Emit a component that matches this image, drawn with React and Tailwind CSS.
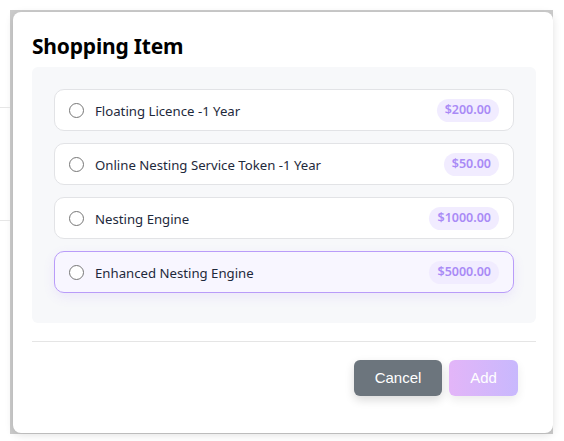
import React from "react";

const items = [
  { name: "Floating Licence -1 Year", price: "$200.00" },
  { name: "Online Nesting Service Token -1 Year", price: "$50.00" },
  { name: "Nesting Engine", price: "$1000.00" },
  { name: "Enhanced Nesting Engine", price: "$5000.00", active: true },
];

export default function App() {
  return (
    <div className="w-[564px] h-[441px] bg-white relative overflow-hidden" style={{ fontFamily: "'Noto Sans', 'Open Sans', sans-serif" }}>
      <div className="absolute left-0 top-[107px] w-[10px] h-px bg-[#e6e6e6]" />
      <div className="absolute left-0 top-[220px] w-[10px] h-px bg-[#e6e6e6]" />
      <div className="ml-[10px] mt-[10px] w-[543px] h-[424px] bg-[#cccccc] pl-[3px] pt-[2px] pb-[1px] flex">
        <div className="flex-1 bg-white rounded-lg shadow-[0_2px_8px_rgba(0,0,0,0.12)] pl-[19px] pr-[17px] pt-[20px]">
          <h2 className="text-[21px] leading-[28px] font-bold text-black tracking-[-0.2px]">Shopping Item</h2>
          <div className="mt-[7px] bg-[#f7f8fa] rounded-md px-[22px] pt-[22px] pb-[30px] flex flex-col gap-[12px]">
            {items.map((it) => (
              <div
                key={it.name}
                className={
                  it.active
                    ? "h-[42px] rounded-[10px] border border-[#b99cf9] bg-[#f8f6ff] shadow-[0_4px_12px_rgba(139,92,246,0.10)] flex items-center pl-[14px] pr-[14px]"
                    : "h-[42px] rounded-[10px] border border-[#e2e3e6] bg-white flex items-center pl-[14px] pr-[14px]"
                }
              >
                <span className="w-[15px] h-[15px] rounded-full border border-[#767676] bg-white shrink-0" />
                <span className="ml-[11px] text-[13.2px] leading-[20px] pt-px font-normal text-[#1e293b]">{it.name}</span>
                <span className="ml-auto h-[23px] px-[8px] rounded-full bg-[#f1ecff] text-[#a98af6] text-[12.5px] font-semibold flex items-center">
                  {it.price}
                </span>
              </div>
            ))}
          </div>
          <div className="mt-[18px] h-px bg-[#e5e5e5]" />
          <div className="mt-[18px] flex justify-end gap-[7px] pr-[18px]" style={{ fontFamily: "'Liberation Sans', Arial, sans-serif" }}>
            <button className="w-[88px] h-[36px] rounded-md bg-[#6c757d] text-white text-[15px] shadow-[0_4px_10px_rgba(0,0,0,0.15)]">Cancel</button>
            <button className="w-[69px] h-[36px] rounded-md bg-gradient-to-r from-[#e3b5f8] to-[#c8b8fd] text-white text-[15px] shadow-[0_4px_10px_rgba(0,0,0,0.08)]">Add</button>
          </div>
        </div>
      </div>
    </div>
  );
}
